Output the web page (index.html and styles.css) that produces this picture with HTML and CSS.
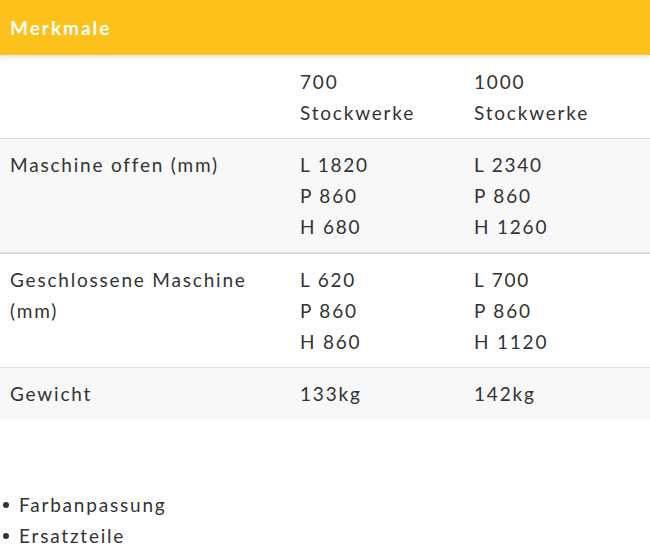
FILE: index.html
```html
<!DOCTYPE html>
<html lang="de">
<head>
<meta charset="utf-8">
<link rel="stylesheet" href="styles.css">
</head>
<body>
<div class="page">
  <div class="header">Merkmale</div>
  <table class="specs">
    <colgroup>
      <col class="c1"><col class="c2"><col class="c3">
    </colgroup>
    <tr class="row white">
      <td></td>
      <td>700<br>Stockwerke</td>
      <td>1000<br>Stockwerke</td>
    </tr>
    <tr class="row gray thick">
      <td>Maschine offen (mm)</td>
      <td>L 1820<br>P 860<br>H 680</td>
      <td>L 2340<br>P 860<br>H 1260</td>
    </tr>
    <tr class="row white">
      <td>Geschlossene Maschine (mm)</td>
      <td>L 620<br>P 860<br>H 860</td>
      <td>L 700<br>P 860<br>H 1120</td>
    </tr>
    <tr class="row gray last">
      <td>Gewicht</td>
      <td>133kg</td>
      <td>142kg</td>
    </tr>
  </table>
  <ul class="extras">
    <li>Farbanpassung</li>
    <li>Ersatzteile</li>
  </ul>
</div>
</body>
</html>
```
FILE: styles.css
```css
html, body {
  margin: 0;
  padding: 0;
  background: #fff;
}
body {
  font-family: Lato, "Open Sans", sans-serif;
  color: #333;
  font-size: 19px;
  letter-spacing: 1.8px;
}
.page {
  width: 650px;
}
.header {
  background: #fcc21b;
  color: #fff;
  font-weight: 700;
  font-size: 19px;
  letter-spacing: 2px;
  height: 55px;
  line-height: 56px;
  padding-left: 10px;
  box-shadow: 0 2px 4px rgba(0,0,0,0.12);
  position: relative;
  z-index: 1;
}
.specs {
  width: 650px;
  border-collapse: collapse;
  table-layout: fixed;
  margin-top: 1px;
}
.c1 { width: 290px; }
.c2 { width: 174px; }
.c3 { width: 186px; }
.specs td {
  vertical-align: top;
  padding: 10px;
  line-height: 31px;
}
.row { border-bottom: 1px solid #ddd; }
.row.thick { border-bottom: 2px solid #ddd; }
.row.last { border-bottom: none; }
.white { background: #fff; }
.gray { background: #f8f8f8; }
.extras {
  list-style: none;
  margin: 70px 0 0 0;
  padding: 0;
}
.extras li {
  line-height: 31px;
  padding-left: 19px;
  position: relative;
}
.extras li::before {
  content: "";
  position: absolute;
  left: 3px;
  top: 13px;
  width: 6px;
  height: 6px;
  border-radius: 50%;
  background: #333;
}
```
